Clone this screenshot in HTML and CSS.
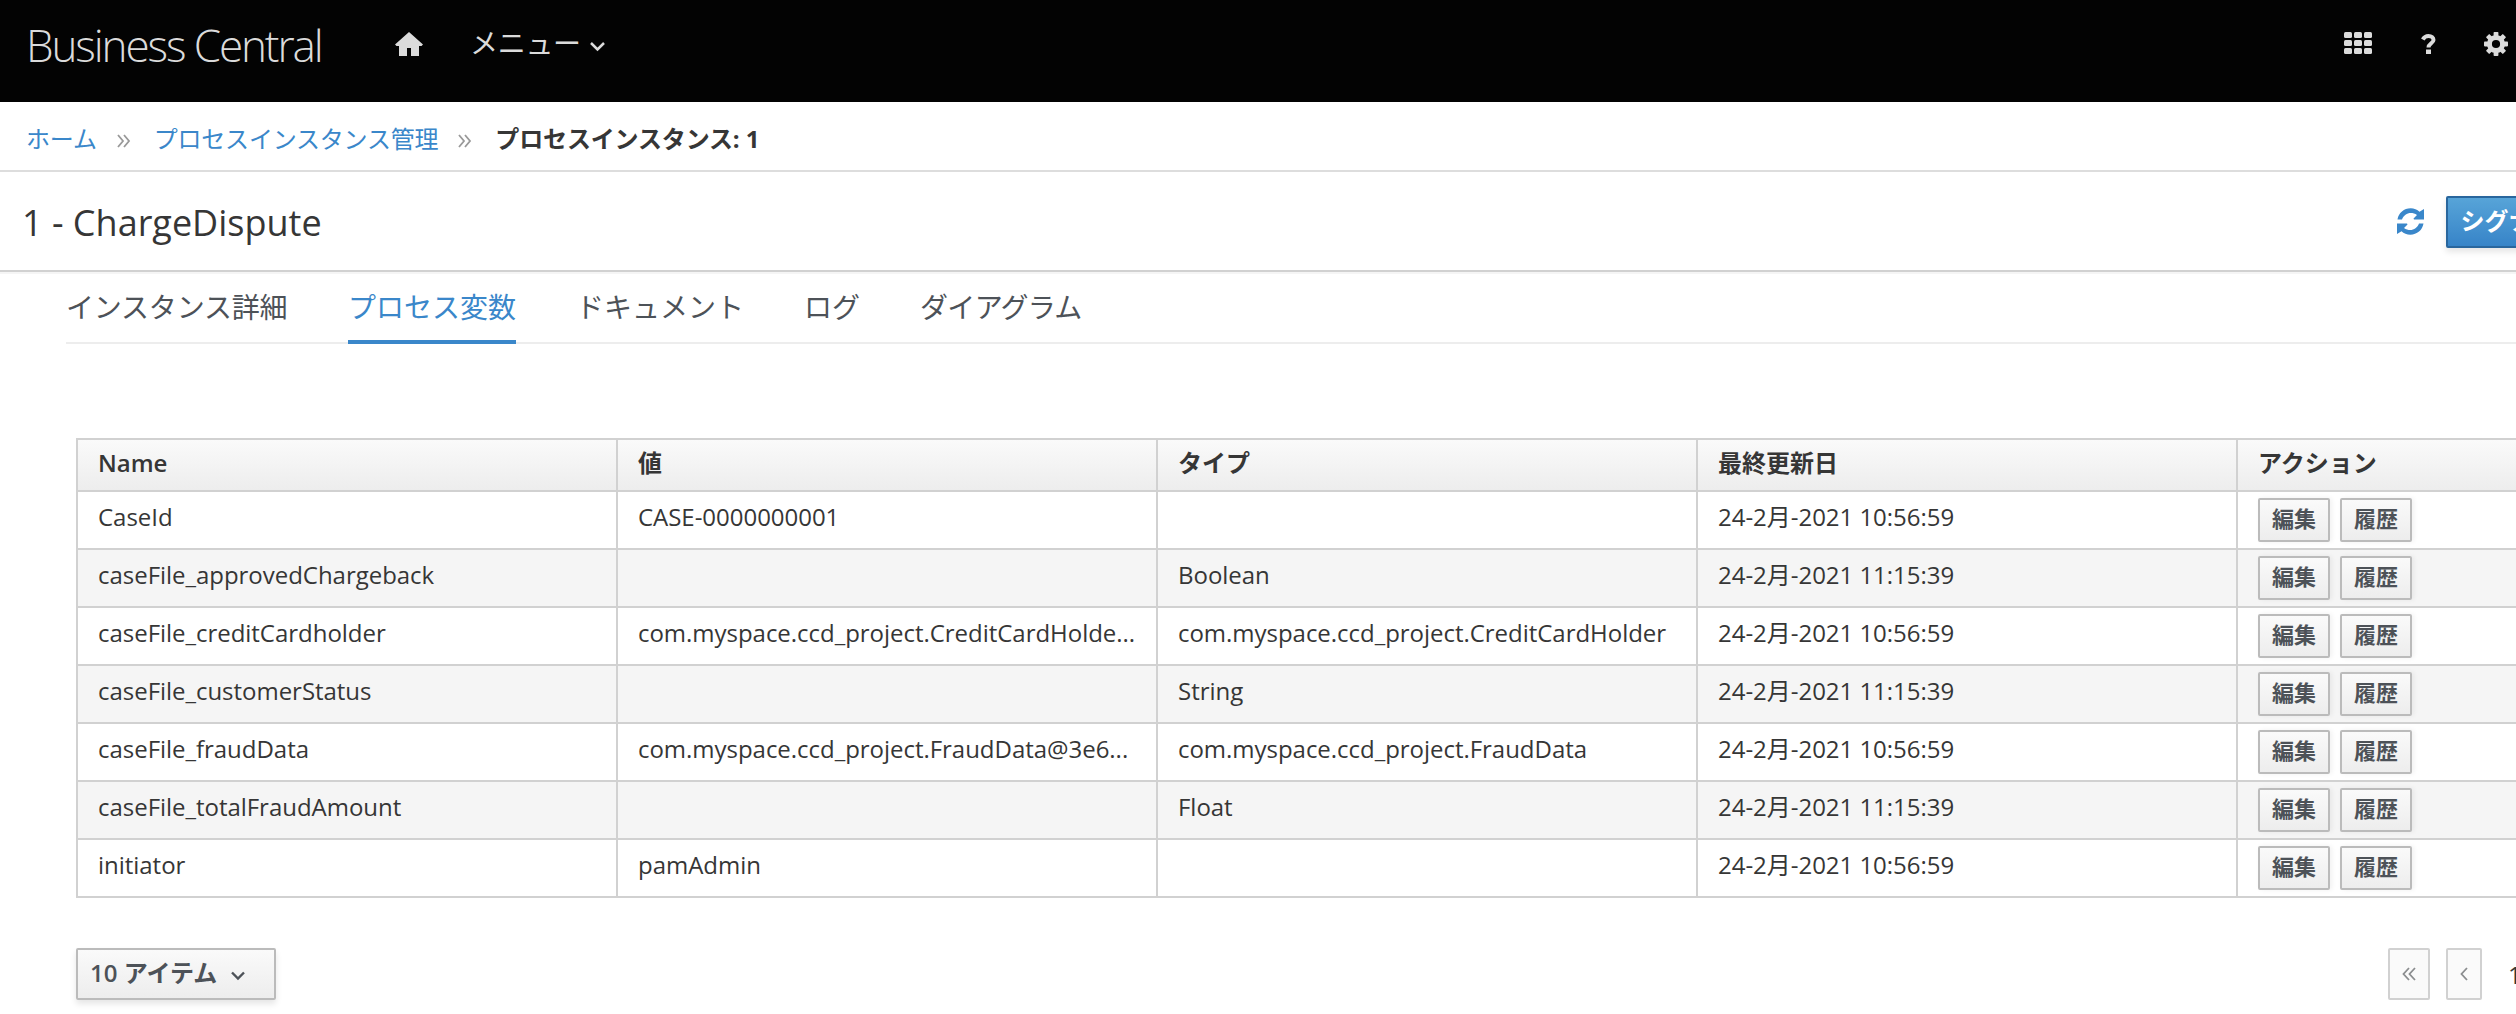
FILE: index.html
```
<!DOCTYPE html>
<html lang="ja">
<head>
<meta charset="utf-8">
<title>Business Central</title>
<link rel="stylesheet" href="styles.css">
</head>
<body>
<header class="navbar">
  <span class="brand">Business Central</span>
  <svg class="home" width="28" height="24" viewBox="0 0 28 24"><path d="M14 0L28 12.500L26.500 14H24V24H16V16H12V24H4V14H1.500L0 12.500Z"/></svg>
  <span class="menu">メニュー</span>
  <svg class="menu-caret" width="17" height="11" viewBox="0 0 17 11"><path d="M2 2L8.500 8.500L15 2"/></svg>
  <div class="tools">
    <svg class="apps" width="28" height="22" viewBox="0 0 28 22"><g><rect width="8" height="6" rx="1.500"/><rect x="10" width="8" height="6" rx="1.500"/><rect x="20" width="8" height="6" rx="1.500"/><rect y="8" width="8" height="6" rx="1.500"/><rect x="10" y="8" width="8" height="6" rx="1.500"/><rect x="20" y="8" width="8" height="6" rx="1.500"/><rect y="16" width="8" height="6" rx="1.500"/><rect x="10" y="16" width="8" height="6" rx="1.500"/><rect x="20" y="16" width="8" height="6" rx="1.500"/></g></svg>
    <svg class="help" width="15" height="20" viewBox="0 0 15 20"><path class="hook" d="M1.800 5.500C3.200 3 5.200 2 7.500 2C10.400 2 12.500 3.600 12.500 6C12.500 9.200 7.500 9.500 7.500 13.500"/><rect x="5" y="15.500" width="5" height="4.500"/></svg>
    <svg width="24" height="24" viewBox="-12 -12 24 24"><g><circle class="ring" r="6.600"/><g id="t"><rect x="-2.400" y="-12" width="4.800" height="5" rx=".8"/><rect x="-2.400" y="7" width="4.800" height="5" rx=".8"/><rect x="-12" y="-2.400" width="5" height="4.800" rx=".8"/><rect x="7" y="-2.400" width="5" height="4.800" rx=".8"/></g><use href="#t" transform="rotate(45)"/></g></svg>
  </div>
</header>
<nav class="crumbs">
  <a>ホーム</a>
  <svg width="14" height="14" viewBox="0 0 14 14"><path d="M1 1L6 7L1 13M7 1L12 7L7 13"/></svg>
  <a>プロセスインスタンス管理</a>
  <svg width="14" height="14" viewBox="0 0 14 14"><path d="M1 1L6 7L1 13M7 1L12 7L7 13"/></svg>
  <b>プロセスインスタンス: 1</b>
</nav>
<section class="titlebar">
  <h1>1 - ChargeDispute</h1>
  <svg class="refresh" width="27" height="27" viewBox="0 0 27 27"><path id="r" d="M.5 11.500C1.500 5 7 .3 13.700 .3C17 .3 20.300 1.700 22.500 3.700L27 1V11.500H17L16.500 10.500L20 7C18 5.500 16 5 13.700 5C10 5 6.500 7.500 5 11.500Z"/><use href="#r" transform="rotate(180 13.500 13.500)"/></svg>
  <button class="primary">シグナル</button>
</section>
<div class="tabs">
  <a class="details">インスタンス詳細</a><a class="active">プロセス変数</a><a>ドキュメント</a><a>ログ</a><a class="diagram">ダイアグラム</a>
</div>
<table class="grid">
  <thead><tr><th>Name</th><th>値</th><th>タイプ</th><th>最終更新日</th><th>アクション</th></tr></thead>
  <tbody>
    <tr><td>CaseId</td><td>CASE-0000000001</td><td></td><td>24-2月-2021 10:56:59</td><td><div class="actions"><button>編集</button><button>履歴</button></div></td></tr>
    <tr><td>caseFile_approvedChargeback</td><td></td><td>Boolean</td><td>24-2月-2021 11:15:39</td><td><div class="actions"><button>編集</button><button>履歴</button></div></td></tr>
    <tr><td>caseFile_creditCardholder</td><td>com.myspace.ccd_project.CreditCardHolde...</td><td>com.myspace.ccd_project.CreditCardHolder</td><td>24-2月-2021 10:56:59</td><td><div class="actions"><button>編集</button><button>履歴</button></div></td></tr>
    <tr><td>caseFile_customerStatus</td><td></td><td>String</td><td>24-2月-2021 11:15:39</td><td><div class="actions"><button>編集</button><button>履歴</button></div></td></tr>
    <tr><td>caseFile_fraudData</td><td>com.myspace.ccd_project.FraudData@3e6...</td><td>com.myspace.ccd_project.FraudData</td><td>24-2月-2021 10:56:59</td><td><div class="actions"><button>編集</button><button>履歴</button></div></td></tr>
    <tr><td>caseFile_totalFraudAmount</td><td></td><td>Float</td><td>24-2月-2021 11:15:39</td><td><div class="actions"><button>編集</button><button>履歴</button></div></td></tr>
    <tr><td>initiator</td><td>pamAdmin</td><td></td><td>24-2月-2021 10:56:59</td><td><div class="actions"><button>編集</button><button>履歴</button></div></td></tr>
  </tbody>
</table>
<footer class="pager">
  <button class="size">10 アイテム<svg width="14" height="10" viewBox="0 0 14 10"><path d="M1 1.500L7 7.500L13 1.500"/></svg></button>
  <button class="page first"><svg width="14" height="14" viewBox="0 0 14 14"><path d="M7 1L1.500 7L7 13M13 1L7.500 7L13 13"/></svg></button>
  <button class="page prev"><svg width="8" height="14" viewBox="0 0 8 14"><path d="M7 1L1.500 7L7 13"/></svg></button>
  <span class="current">1</span>
</footer>
</body>
</html>
```
FILE: styles.css
```
* { box-sizing: border-box; }
body {
  margin: 0;
  width: 2516px;
  height: 1014px;
  overflow: hidden;
  background: #fff;
  color: #363636;
  font: 24px/40px "Open Sans", "Noto Sans CJK JP", sans-serif;
  white-space: nowrap;
}
svg { flex: none; display: block; }
button {
  font: inherit;
  font-weight: 600;
  color: #4d5258;
  padding: 0;
  margin: 0;
  border: 2px solid #bbb;
  border-radius: 2px;
  background: linear-gradient(#fafafa, #ededed);
  box-shadow: 0 4px 6px rgba(3, 3, 3, .1);
}
.navbar {
  display: flex;
  align-items: flex-start;
  height: 102px;
  padding-left: 26px;
  background: #030303;
  color: #dbdbdb;
  fill: #dbdbdb;
}
.brand {
  width: 369px;
  padding-top: 15px;
  font-size: 44px;
  font-weight: 300;
  line-height: 60px;
  letter-spacing: -2.1px;
}
.home { margin-top: 32px; }
.menu { margin: 23px 0 0 47px; font-size: 28px; letter-spacing: -.3px; }
.menu-caret { margin: 41px 0 0 8px; fill: none; stroke: #dbdbdb; stroke-width: 2.500px; }
.tools { display: flex; margin: 32px 8px 0 auto; gap: 48px; }
.apps { margin-right: 1px; }
.help { margin-top: 2px; }
.hook { fill: none; stroke: #dbdbdb; stroke-width: 4px; }
.ring { fill: none; stroke: #dbdbdb; stroke-width: 5px; }
.crumbs {
  display: flex;
  align-items: center;
  height: 70px;
  padding: 5px 0 0 26px;
  border-bottom: 2px solid #ddd;
}
.crumbs a { color: #3a87ca; letter-spacing: -.2px; }
.crumbs svg { margin: 4px 23px 0 20px; fill: none; stroke: #999; stroke-width: 1.800px; }
.crumbs b { font-weight: 700; letter-spacing: -.15px; }
.titlebar {
  display: flex;
  align-items: center;
  height: 100px;
  padding-left: 22px;
  border-bottom: 2px solid #d1d1d1;
  box-shadow: 0 2px 0 #f5f5f5;
}
h1 { margin: 3px auto 0 0; font-size: 36px; font-weight: 400; }
.refresh { fill: #3a87ca; margin: 0 22px 0 0; }
.primary {
  width: 132px;
  height: 52px;
  margin: 2px -62px 0 0;
  padding: 0 7px 3px 0;
  color: #fff;
  font-weight: 700;
  border-color: #29669d;
  background: linear-gradient(#57a4d8, #3784c8);
}
.tabs {
  display: flex;
  gap: 60px;
  height: 72px;
  margin-left: 66px;
  border-bottom: 2px solid #ededed;
  color: #4d5258;
  font-size: 28px;
  line-height: 70px;
}
.tabs a { height: 72px; }
.tabs .details { width: 222px; letter-spacing: -.2px; }
.tabs .diagram { letter-spacing: -.7px; }
.tabs .active { color: #3a87ca; border-bottom: 4px solid #3a87ca; }
.grid {
  width: 2702px;
  margin: 94px 0 0 76px;
  table-layout: fixed;
  border-collapse: separate;
  border-spacing: 0;
  border-top: 2px solid #d1d1d1;
  border-left: 2px solid #d1d1d1;
}
th, td {
  height: 58px;
  padding: 5px 20px 11px;
  text-align: left;
  vertical-align: top;
  letter-spacing: -.03px;
  border-right: 2px solid #d1d1d1;
  border-bottom: 2px solid #d1d1d1;
}
th {
  height: 52px;
  padding: 3px 20px 7px;
  font-weight: 600;
  background: linear-gradient(#fafafa, #ededed);
}
tbody tr:nth-child(even) { background: #f5f5f5; }
.actions { display: flex; gap: 10px; height: 40px; padding-top: 1px; }
.actions button {
  width: 72px;
  height: 44px;
  flex: none;
  font-size: 22px;
  line-height: 36px;
  font-weight: 700;
  padding-bottom: 4px;
  box-shadow: 2px 0 5px rgba(3, 3, 3, .06);
}
.pager { display: flex; margin: 50px 0 0 76px; }
.size {
  display: flex;
  align-items: center;
  width: 200px;
  height: 52px;
  padding: 0 0 2px 12px;
}
.size svg { margin: 5px 0 0 14px; fill: none; stroke: #4d5258; stroke-width: 2.400px; }
.page {
  display: flex;
  align-items: center;
  justify-content: center;
  height: 52px;
  background: #fafafa;
  border-color: #d1d1d1;
  box-shadow: none;
}
.page svg { fill: none; stroke: #8b8d8f; stroke-width: 1.800px; }
.first { width: 42px; margin-left: auto; }
.prev { width: 36px; margin: 0 26px 0 16px; }
.current { width: 8px; padding-top: 7px; }
```
